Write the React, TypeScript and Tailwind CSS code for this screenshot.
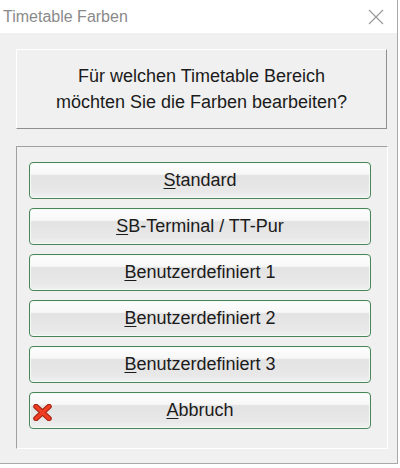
import React from 'react';

const buttons = [
  { key: 'S', rest: 'tandard' },
  { key: 'S', rest: 'B-Terminal / TT-Pur' },
  { key: 'B', rest: 'enutzerdefiniert 1' },
  { key: 'B', rest: 'enutzerdefiniert 2' },
  { key: 'B', rest: 'enutzerdefiniert 3' },
];

const RedCross: React.FC = () => (
  <svg width="19" height="17" viewBox="0 0 19 17" className="absolute left-[3px] top-[11px]">
    <path d="M3 2.5 L16 14.5 M16 2.5 L3 14.5" stroke="#a2210f" strokeWidth="5.5" strokeLinecap="round" />
    <path d="M3 2.5 L16 14.5 M16 2.5 L3 14.5" stroke="#ef3d24" strokeWidth="3.4" strokeLinecap="round" />
  </svg>
);

const DialogButton: React.FC<{ label: React.ReactNode; icon?: boolean }> = ({ label, icon }) => (
  <button className="relative h-[37px] w-full rounded-[4px] border border-[#4a8559] bg-[linear-gradient(to_bottom,#fdfdfd_0%,#f8f8f8_32%,#e3e3e3_36%,#e8e8e8_80%,#f0f0f0_100%)] shadow-[inset_0_0_0_1px_#f4fbf5] text-[18px] text-[#1b1b1b]">
    {icon && <RedCross />}
    {label}
  </button>
);

export default function App() {
  return (
    <div className="w-[400px] h-[468px] bg-white font-['Liberation_Sans',Arial,sans-serif]">
      <div className="w-[398px] h-[464px] flex flex-col border-r border-b border-[#a9a9a9] bg-[#f0f0f0]">
        {/* Title bar */}
        <div className="h-[33px] bg-white flex items-center justify-between pl-[3px] pr-[13px]">
          <span className="text-[16px] text-[#8a8a8a]">Timetable Farben</span>
          <svg width="16" height="16" viewBox="0 0 16 16">
            <path d="M1 1 L15 15 M15 1 L1 15" stroke="#9a9a9a" strokeWidth="1.2" />
          </svg>
        </div>

        {/* Question panel */}
        <div className="mt-[16px] ml-[16px] w-[371px] h-[80px] border border-t-white border-l-white border-b-[#8f8f8f] border-r-[#8f8f8f] flex flex-col items-center justify-center text-[18px] leading-[26px] text-[#1b1b1b] text-center">
          <span>Für welchen Timetable Bereich</span>
          <span>möchten Sie die Farben bearbeiten?</span>
        </div>

        {/* Button panel */}
        <div className="mt-[17px] ml-[16px] w-[372px] border border-t-[#a0a0a0] border-l-[#a0a0a0] border-b-white border-r-white pl-[12px] pr-[16px] pt-[15px] pb-[19px] flex flex-col gap-[9px]">
          {buttons.map((b, i) => (
            <DialogButton
              key={i}
              label={
                <>
                  <span className="underline underline-offset-[2px]">{b.key}</span>
                  {b.rest}
                </>
              }
            />
          ))}
          <DialogButton
            icon
            label={
              <>
                <span className="underline underline-offset-[2px]">A</span>bbruch
              </>
            }
          />
        </div>
      </div>
    </div>
  );
}
